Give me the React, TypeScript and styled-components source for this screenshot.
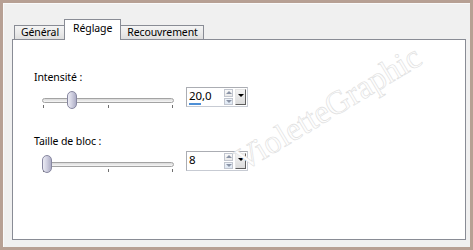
import React from 'react';
import styled, { createGlobalStyle } from 'styled-components';

const GlobalStyle = createGlobalStyle`
  html, body {
    margin: 0;
    padding: 0;
    background: #f0f0f0;
  }
  body {
    font-family: "Noto Sans", "DejaVu Sans", sans-serif;
    font-size: 10.5px;
    letter-spacing: -0.1px;
    color: #000;
  }
`;

const Frame = styled.div`
  width: 473px;
  height: 250px;
  box-sizing: border-box;
  border: 3px solid #b7a094;
  background: #f0f0f0;
  box-shadow: inset 1px 1px 0 #fafafa;
  padding: 16px 4px 7px 9px;
  display: flex;
  flex-direction: column;
`;

const TabRow = styled.div`
  display: flex;
  align-items: flex-end;
  padding-left: 2px;
  margin-bottom: -1px;
  position: relative;
  z-index: 1;
`;

const Tab = styled.div<{ $active?: boolean }>`
  box-sizing: border-box;
  height: ${(p) => (p.$active ? '21px' : '15px')};
  padding: ${(p) => (p.$active ? '2px 8px 0' : '0 5px 0 6px')};
  line-height: 12px;
  border: 1px solid #898c95;
  border-bottom: ${(p) => (p.$active ? 'none' : '1px solid #898c95')};
  background: ${(p) =>
    p.$active ? '#ffffff' : 'linear-gradient(to bottom, #f4f4f4 0%, #ebebeb 50%, #dedede 100%)'};
  margin-right: -1px;
  white-space: nowrap;
`;

const Panel = styled.div`
  flex: 1;
  position: relative;
  overflow: hidden;
  background: #ffffff;
  border: 1px solid #898c95;
  padding: 30px 0 0 21px;
  display: flex;
  flex-direction: column;
  gap: 24px;
`;

const Group = styled.div`
  display: flex;
  flex-direction: column;
  gap: 2px;
`;

const Label = styled.div`
  line-height: 15px;
  height: 15px;
`;

const Row = styled.div`
  display: flex;
  align-items: flex-start;
  padding-left: 8px;
  gap: 11px;
`;

const Slider = styled.div`
  position: relative;
  width: 133px;
  height: 23px;
  display: flex;
  flex-direction: column;
`;

const Track = styled.div`
  margin-top: 11px;
  width: 132px;
  height: 5px;
  box-sizing: border-box;
  border: 1px solid #a3a3a3;
  border-radius: 3px;
  background: linear-gradient(to bottom, #d9d9d9, #f7f7f7);
`;

const Ticks = styled.div`
  margin-top: 2px;
  display: flex;
  justify-content: space-between;
  padding: 0 2px 0 1px;
`;

const Tick = styled.span`
  width: 1px;
  height: 3px;
  background: #6f6f6f;
`;

const Thumb = styled.div`
  position: absolute;
  top: 4px;
  width: 10px;
  height: 18px;
  box-sizing: border-box;
  border: 1px solid #8787a0;
  border-radius: 5px;
  background: linear-gradient(to right, #ececf4 0%, #d2d2e2 45%, #aeaec6 100%);
`;

const SpinBox = styled.div`
  width: 62px;
  height: 20px;
  box-sizing: border-box;
  border: 1px solid #abadb3;
  border-right-color: #c7cbd3;
  border-bottom-color: #c7cbd3;
  background: #fff;
  display: flex;
  padding: 1px;
`;

const ValueArea = styled.div`
  flex: 1;
  display: flex;
  flex-direction: column;
  justify-content: space-between;
  padding-left: 1px;
`;

const ValueText = styled.div`
  font-size: 11.5px;
  line-height: 13px;
`;

const ValueBar = styled.div`
  height: 2px;
  background: #4d8fd6;
`;

const Spin = styled.div`
  width: 9px;
  display: flex;
  flex-direction: column;
  gap: 1px;
  margin-right: 2px;
`;

const SpinButton = styled.div<{ $down?: boolean }>`
  flex: 1;
  box-sizing: border-box;
  border: 1px solid #c2c6cf;
  background: ${(p) =>
    p.$down ? 'linear-gradient(#eef3fa, #dfe8f3)' : 'linear-gradient(#fafafa, #eaeaea)'};
  display: flex;
  align-items: center;
  justify-content: center;
  &::after {
    content: '';
    border-left: 3px solid transparent;
    border-right: 3px solid transparent;
    ${(p) => (p.$down ? 'border-top: 3px solid #8a93a6;' : 'border-bottom: 3px solid #8a93a6;')}
  }
`;

const DropButton = styled.div`
  width: 11px;
  box-sizing: border-box;
  border: 1px solid #e6e6e6;
  border-right-color: #5f5f5f;
  border-bottom-color: #5f5f5f;
  background: linear-gradient(#f3f3f3, #dcdcdc);
  display: flex;
  justify-content: center;
  padding-top: 4px;
  &::after {
    content: '';
    width: 0;
    height: 0;
    border-left: 3px solid transparent;
    border-right: 3px solid transparent;
    border-top: 3px solid #000;
  }
`;

const Watermark = styled.div`
  position: absolute;
  left: 200px;
  top: 50px;
  width: 230px;
  text-align: center;
  font-family: "Liberation Serif", "DejaVu Serif", serif;
  font-size: 33px;
  line-height: 36px;
  letter-spacing: 0;
  color: #fdfdfd;
  -webkit-text-stroke: 0.6px #dedede;
  transform: rotate(-31deg);
  pointer-events: none;
  white-space: nowrap;
`;

interface SettingProps {
  label: string;
  value: number;
  max: number;
  display: string;
  hasBar?: boolean;
}

const Setting: React.FC<SettingProps> = ({ label, value, max, display, hasBar }) => (
  <Group>
    <Label>{label}</Label>
    <Row>
      <Slider>
        <Track />
        <Ticks>
          <Tick />
          <Tick />
          <Tick />
        </Ticks>
        <Thumb style={{ left: `${Math.round((value / max) * 123)}px` }} />
      </Slider>
      <SpinBox>
        <ValueArea>
          <ValueText>{display}</ValueText>
          {hasBar && <ValueBar style={{ width: '12px' }} />}
        </ValueArea>
        <Spin>
          <SpinButton />
          <SpinButton $down />
        </Spin>
        <DropButton />
      </SpinBox>
    </Row>
  </Group>
);

export default function App() {
  return (
    <>
      <GlobalStyle />
      <Frame>
        <TabRow>
          <Tab>Général</Tab>
          <Tab $active>Réglage</Tab>
          <Tab>Recouvrement</Tab>
        </TabRow>
        <Panel>
          <Setting label="Intensité :" value={20} max={100} display="20,0" hasBar />
          <Setting label="Taille de bloc :" value={0} max={100} display="8" />
          <Watermark>VioletteGraphic</Watermark>
        </Panel>
      </Frame>
    </>
  );
}
